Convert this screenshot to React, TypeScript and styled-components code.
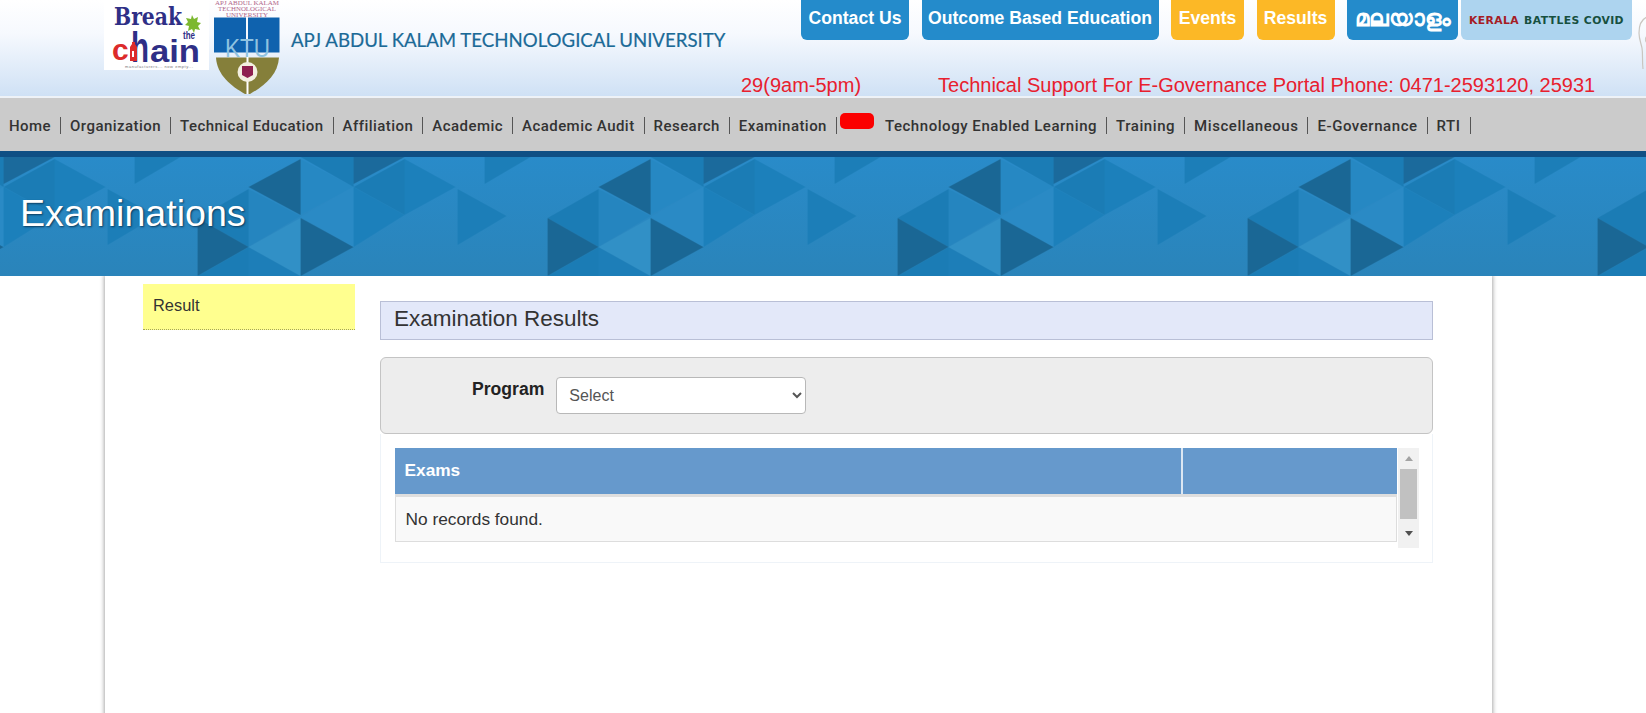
import styled, { createGlobalStyle } from 'styled-components';

const GlobalStyle = createGlobalStyle`
  html, body {
    margin: 0;
    height: 713px;
    overflow: hidden;
    background: #fff;
    font-family: "Liberation Sans", Arial, sans-serif;
    color: #333;
  }
  * { box-sizing: border-box; }
`;

const topLinks = [
  { label: 'Contact Us', width: 108, accent: false },
  { label: 'Outcome Based Education', width: 237, accent: false },
  { label: 'Events', width: 73, accent: true },
  { label: 'Results', width: 78, accent: true },
  { label: 'മലയാളം', width: 111, accent: false },
];

const menu = [
  'Home', 'Organization', 'Technical Education', 'Affiliation', 'Academic', 'Academic Audit', 'Research', 'Examination',
];
const menuAfter = ['Technology Enabled Learning', 'Training', 'Miscellaneous', 'E-Governance', 'RTI'];

const BreakLogo = () => (
  <LogoBox>
    <svg width="105" height="70" viewBox="0 0 105 70">
      <text x="10" y="25" fontFamily="DejaVu Serif" fontWeight="700" fontSize="24" fill="#2f2f86" textLength="68" lengthAdjust="spacingAndGlyphs">Break</text>
      <path d="M88 15l2 4 4-2-1 5 4 1-3 3 2 4-5-1-1 4-2-4-4 2 1-5-4-1 3-3-2-4 5 1z" fill="#7cb82f" />
      <text x="79" y="39" fontFamily="Liberation Sans" fontWeight="700" fontSize="10" fill="#2f2f86" textLength="12" lengthAdjust="spacingAndGlyphs">the</text>
      <text x="8" y="60" fontFamily="Liberation Sans" fontWeight="700" fontSize="30" fill="#dc2b2b">c</text>
      <text x="27" y="62" fontFamily="Liberation Sans" fontWeight="700" fontSize="42" fill="#2f2f86" textLength="18" lengthAdjust="spacingAndGlyphs">h</text>
      <path d="M28 42h3v2l2 3v14h-7v-14l2-3z" fill="#dc2b2b" />
      <path d="M28 51h2v6h-2z" fill="#fff" />
      <text x="46" y="62" fontFamily="Liberation Sans" fontWeight="700" fontSize="31" fill="#2f2f86" textLength="50" lengthAdjust="spacingAndGlyphs">ain</text>
      <text x="21" y="68" fontFamily="Liberation Sans" fontSize="4" fill="#777" textLength="68">manufacturers... now empty...</text>
    </svg>
  </LogoBox>
);

const KtuLogo = () => (
  <KtuBox width="67" height="96" viewBox="0 0 67 96">
    <g fontFamily="Liberation Serif" fontSize="6" fill="#b0668a" textAnchor="middle">
      <text x="33" y="4.500" textLength="64" lengthAdjust="spacingAndGlyphs">APJ ABDUL KALAM</text>
      <text x="33" y="10.500" textLength="58" lengthAdjust="spacingAndGlyphs">TECHNOLOGICAL</text>
      <text x="33" y="16.500" textLength="42" lengthAdjust="spacingAndGlyphs">UNIVERSITY</text>
    </g>
    <path d="M0 17.500h32v35H0zM34 17.500h31.500v35H34z" fill="#0f62ae" />
    <path d="M2 57.500h63c-1 17-14 28-29 36.500h-5C17 86 3 75 2 57.500z" fill="#857f3a" />
    <path d="M32.500 53h2v41h-2z" fill="#fff" />
    <text x="33.500" y="57" fontFamily="Liberation Sans" fontSize="25" fill="#8fc3e0" textAnchor="middle" textLength="45" lengthAdjust="spacingAndGlyphs">KTU</text>
    <circle cx="33.500" cy="72" r="10" fill="#f3efe0" />
    <path d="M28 66h11v9l-5.500 3-5.500-3z" fill="#8e1f4f" />
  </KtuBox>
);

const Figure = () => (
  <FigureBox width="10" height="54" viewBox="0 0 10 54">
    <path d="M9 1C4 3 1 9 1 17c0 6 2 10 3 15 1 6 0 12 1 21M9 20c-2 2-2 5 0 7" fill="none" stroke="#c9c6c0" strokeWidth="1.200" />
  </FigureBox>
);

const BannerPattern = () => (
  <PatternSvg width="100%" height="119">
    <defs>
      <linearGradient id="bannerBase" x1="0" y1="0" x2="0" y2="1">
        <stop offset="0" stopColor="#298bc9" />
        <stop offset="1" stopColor="#2a84ba" />
      </linearGradient>
      <pattern id="tiles" width="350" height="119" patternUnits="userSpaceOnUse" patternTransform="translate(107.600 0)">
        <path d="M27 0h46L27 27zM0 32l49 27L0 88z" fill="#1c7eb8" />
        <path d="M90 61l51-29v58z" fill="#1b7cb5" />
        <path d="M141 32l52 27-52 31z" fill="#2585bf" />
        <path d="M90 61l51 29-51 29z" fill="#1a6795" />
        <path d="M90 119l51-29v29z" fill="#1b7cb5" />
        <path d="M141 90l52 29h-52z" fill="#1d7eb8" />
        <path d="M141 90l52-29v58z" fill="#3190c6" />
        <path d="M193 2l-52 28 52 28z" fill="#1a6795" />
        <path d="M193 2l53 28-53 28z" fill="#2688c3" />
        <path d="M193 61l53 29-53 29z" fill="#1a6795" />
        <path d="M193 60l53-30v60z" fill="#2a8ac5" />
        <path d="M193 0l53 30V0z" fill="#1b7cb5" />
        <path d="M246 0v27l51-27z" fill="#1b6a9c" />
        <path d="M246 30l51-28v56z" fill="#1b7cb5" />
        <path d="M246 30l51 28-51 32z" fill="#1c80bb" />
        <path d="M297 2l51 28-51 28z" fill="#1c80bb" />
      </pattern>
    </defs>
    <rect width="100%" height="100%" fill="url(#bannerBase)" />
    <rect width="100%" height="100%" fill="url(#tiles)" />
  </PatternSvg>
);

const App = () => (
  <Page>
    <GlobalStyle />
    <Header>
      <Brand>
        <BreakLogo />
        <KtuLogo />
        <UniversityName>APJ ABDUL KALAM TECHNOLOGICAL UNIVERSITY</UniversityName>
      </Brand>
      <HeaderRight>
        <TopLinks>
          {topLinks.map((link) => (
            <TopLink key={link.label} $accent={link.accent} $width={link.width}>{link.label}</TopLink>
          ))}
          <CovidLink><b>KERALA</b> <i>BATTLES COVID</i></CovidLink>
          <Figure />
        </TopLinks>
        <Notice>
          <span>29(9am-5pm)</span>
          <span>Technical Support For E-Governance Portal Phone: 0471-2593120, 25931</span>
        </Notice>
      </HeaderRight>
    </Header>

    <Nav>
      {menu.map((item) => <NavItem key={item} $spacing={0.45}>{item}</NavItem>)}
      <NewBadge />
      {menuAfter.map((item) => <NavItem key={item} $spacing={0.55}>{item}</NavItem>)}
    </Nav>

    <Banner>
      <BannerPattern />
      <BannerTitle>Examinations</BannerTitle>
    </Banner>

    <Sheet>
      <Sidebar>
        <SideLink>Result</SideLink>
      </Sidebar>
      <Main>
        <SectionTitle>Examination Results</SectionTitle>
        <FilterPanel>
          <FilterLabel>Program</FilterLabel>
          <ProgramSelect defaultValue="">
            <option value="">Select</option>
          </ProgramSelect>
        </FilterPanel>
        <TableCard>
          <TableArea>
            <HeadRow>
              <HeadCell>Exams</HeadCell>
              <HeadCell />
            </HeadRow>
            <EmptyRow>No records found.</EmptyRow>
          </TableArea>
          <ScrollTrack>
            <ScrollArrow $up />
            <ScrollThumb />
            <ScrollArrow />
          </ScrollTrack>
        </TableCard>
      </Main>
    </Sheet>
  </Page>
);

export default App;

const Page = styled.div`
  width: 1646px;
  height: 713px;
  overflow: hidden;
`;

const Header = styled.header`
  height: 98px;
  display: flex;
  justify-content: space-between;
  background: linear-gradient(#fff 0%, #f6f9fe 35%, #cfe1f5 100%);
  border-bottom: 2px solid #eef2f7;
`;

const Brand = styled.div`
  display: flex;
  align-items: flex-start;
  padding-left: 104px;
`;

const LogoBox = styled.div`
  width: 105px;
  height: 70px;
  background: #fff;
  line-height: 0;
`;

const KtuBox = styled.svg`
  margin-left: 5px;
  flex: none;
`;

const UniversityName = styled.div`
  margin: 28px 0 0 10px;
  font-family: "Lato", sans-serif;
  font-size: 18.650px;
  line-height: 24px;
  white-space: nowrap;
  color: #1b6a97;
  -webkit-text-stroke: 0.200px #1b6a97;
`;

const HeaderRight = styled.div`
  width: 905px;
  flex: none;
  display: flex;
  flex-direction: column;
`;

const TopLinks = styled.div`
  display: flex;
  align-items: flex-start;
  padding-left: 60px;
  height: 40px;
`;

const TopLink = styled.div<{ $accent: boolean; $width: number }>`
  width: ${(p) => p.$width}px;
  height: 40px;
  flex: none;
  margin-right: 12.500px;
  padding-bottom: 4px;
  display: flex;
  align-items: center;
  justify-content: center;
  border-radius: 0 0 6px 6px;
  background: ${(p) => (p.$accent ? '#fcb826' : '#248bcb')};
  color: #fff;
  font-size: 17.600px;
  font-weight: 700;
  white-space: nowrap;

  &:nth-child(5) {
    margin-right: 3px;
    padding-bottom: 2px;
    font-size: 22.500px;
  }
`;

const CovidLink = styled.div`
  width: 171px;
  height: 40px;
  flex: none;
  display: flex;
  align-items: center;
  justify-content: center;
  gap: 5px;
  border-radius: 0 0 6px 6px;
  background: #add4ef;
  font-family: "DejaVu Sans", sans-serif;
  font-size: 10.800px;
  font-weight: 700;
  letter-spacing: 0.400px;
  white-space: nowrap;

  b { color: #a51c24; }
  i { color: #17503f; font-style: normal; }
`;

const FigureBox = styled.svg`
  margin: 16px 0 0 6px;
  flex: none;
`;

const Notice = styled.div`
  margin-top: 34px;
  display: flex;
  gap: 77px;
  color: #e8202e;
  font-size: 20px;
  line-height: 23px;
  white-space: nowrap;
`;

const Nav = styled.nav`
  height: 53px;
  padding-top: 2px;
  display: flex;
  align-items: center;
  background: #cbcbcb;
`;

const NavItem = styled.div<{ $spacing: number }>`
  height: 17px;
  padding: 0 9px;
  display: flex;
  align-items: center;
  border-right: 1px solid #555;
  font-family: "Roboto", sans-serif;
  font-size: 15px;
  font-weight: 500;
  letter-spacing: ${(p) => p.$spacing}px;
  color: #333;
  white-space: nowrap;
`;

const NewBadge = styled.div`
  width: 34px;
  height: 16px;
  margin: 0 2px 9px 3px;
  border-radius: 5px;
  background: #fb0000;
`;

const Banner = styled.section`
  position: relative;
  height: 125px;
  border-top: 6px solid #0f4f84;
  background: #2a8cca;
  padding: 32px 0 0 20px;
`;

const PatternSvg = styled.svg`
  position: absolute;
  inset: 0;
  display: block;
`;

const BannerTitle = styled.h1`
  position: relative;
  margin: 0;
  color: #fff;
  font-size: 37.600px;
  font-weight: 400;
  line-height: 48px;
  text-shadow: 1px 1px 2px #0b3a5c;
`;

const Sheet = styled.main`
  width: 1387px;
  height: 440px;
  margin-left: 105px;
  padding: 8px 59px 0 38px;
  display: flex;
  gap: 25px;
  background: #fff;
  box-shadow: 0 0 4px 1px #aaa;
`;

const Sidebar = styled.aside`
  width: 212px;
  flex: none;
`;

const SideLink = styled.div`
  height: 46px;
  padding: 12px 10px 0;
  background: #ffff8f;
  border-bottom: 1px dotted #a5a55a;
  font-size: 16.400px;
  line-height: 19px;
  color: #333;
`;

const Main = styled.div`
  flex: 1;
  padding-top: 17px;
  min-width: 0;
`;

const SectionTitle = styled.h2`
  height: 39px;
  margin: 0 0 17px;
  padding-left: 13px;
  background: #e3e8f9;
  border: 1px solid #b9bfd6;
  color: #333;
  font-size: 22.500px;
  font-weight: 400;
  line-height: 34px;
`;

const FilterPanel = styled.div`
  height: 77px;
  padding: 19px 0 0 91px;
  display: flex;
  align-items: flex-start;
  gap: 12px;
  background: #ededed;
  border: 1px solid #c4c4c4;
  border-radius: 6px;
`;

const FilterLabel = styled.label`
  margin-top: 1px;
  font-size: 17.600px;
  font-weight: 700;
  line-height: 22px;
  color: #222;
`;

const ProgramSelect = styled.select`
  width: 250px;
  height: 37px;
  padding: 0 8px;
  background: #fff;
  border: 1px solid #b8b8b8;
  border-radius: 4px;
  color: #555;
  font-family: "Liberation Sans", sans-serif;
  font-size: 16px;
`;

const TableCard = styled.div`
  height: 129px;
  padding: 14px 13px 0 13.500px;
  display: flex;
  align-items: flex-start;
  border: 1px solid #eef3f8;
  border-top: 0;
`;

const TableArea = styled.div`
  width: 1002.500px;
`;

const HeadRow = styled.div`
  height: 49px;
  display: grid;
  grid-template-columns: 1fr 216px;
  background: #6699cc;
  border-bottom: 3px solid #dedede;
`;

const HeadCell = styled.div`
  padding-left: 10px;
  color: #fff;
  font-size: 17.300px;
  font-weight: 700;
  line-height: 44px;

  & + & {
    border-left: 2px solid #dbe7f3;
  }
`;

const EmptyRow = styled.div`
  height: 45px;
  padding-left: 10px;
  background: #f9f9f9;
  border: 1px solid #ddd;
  border-top: 0;
  font-size: 17.300px;
  line-height: 44px;
  color: #333;
`;

const ScrollTrack = styled.div`
  width: 21px;
  height: 100px;
  margin-left: 1px;
  display: flex;
  flex-direction: column;
  align-items: center;
  background: #f1f1f1;
`;

const ScrollThumb = styled.div`
  width: 17px;
  height: 50px;
  background: #c1c1c1;
`;

const ScrollArrow = styled.div<{ $up?: boolean }>`
  width: 17px;
  height: ${(p) => (p.$up ? 21 : 29)}px;
  display: flex;
  align-items: center;
  justify-content: center;

  &::before {
    content: '';
    border-left: 4.500px solid transparent;
    border-right: 4.500px solid transparent;
    ${(p) => (p.$up ? 'border-bottom: 5px solid #a3a3a3;' : 'border-top: 5px solid #505050;')}
  }
`;
